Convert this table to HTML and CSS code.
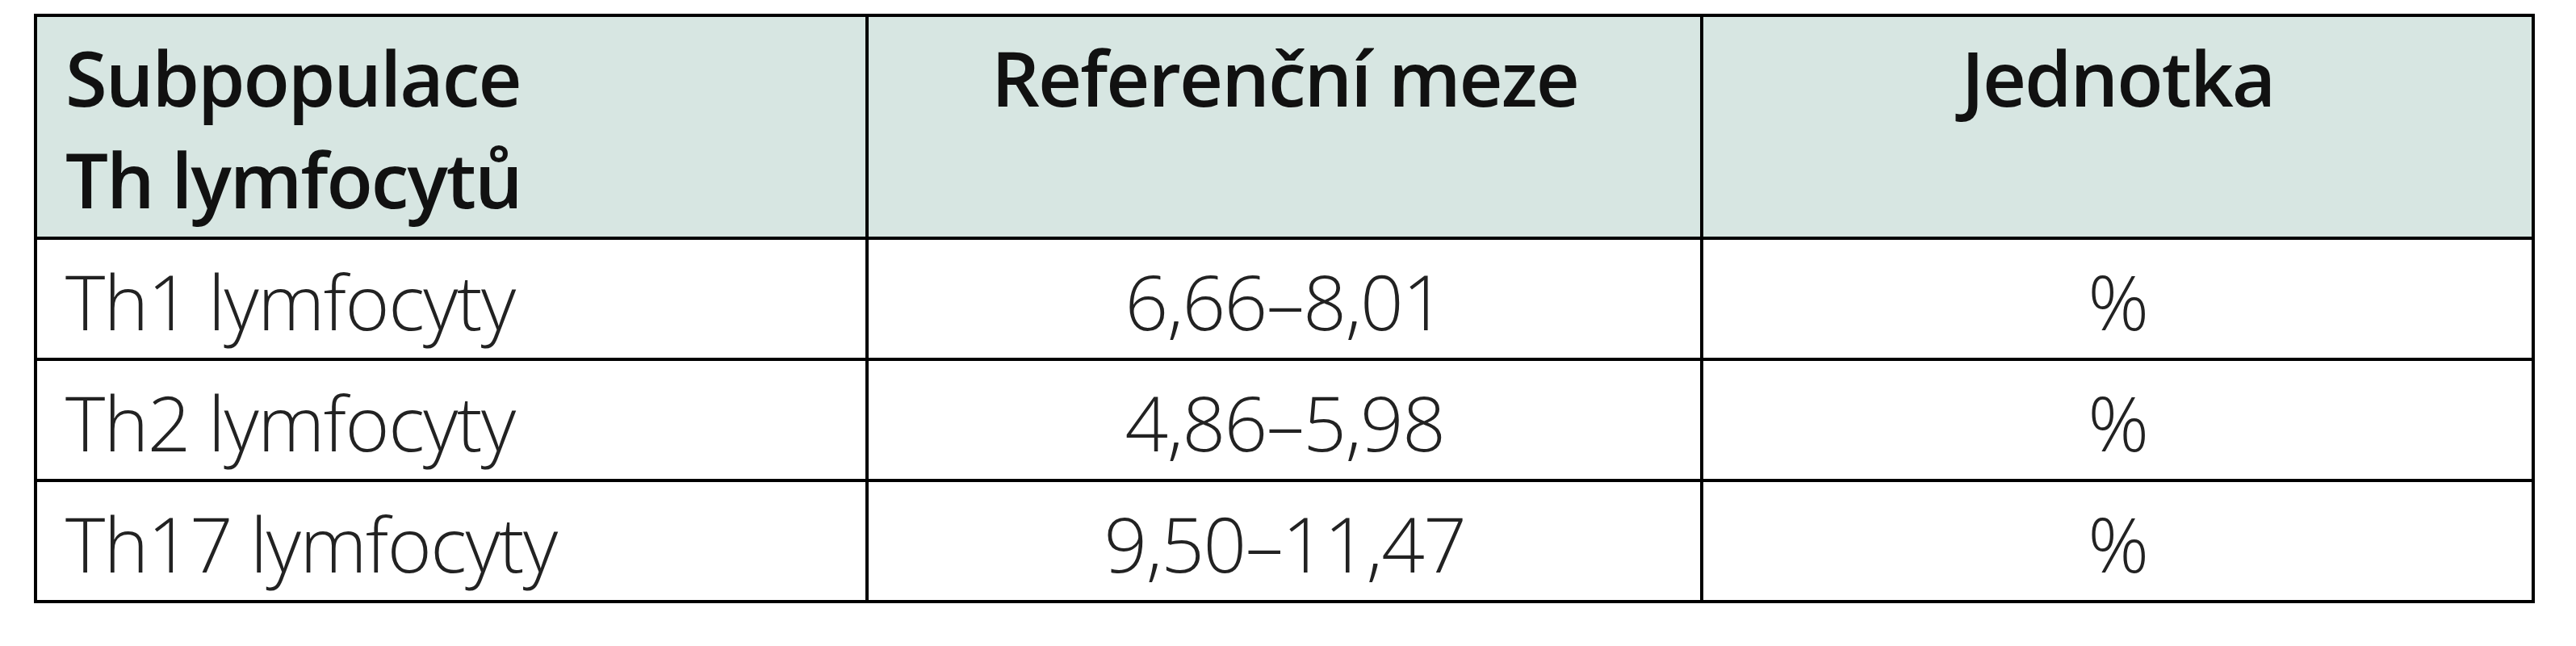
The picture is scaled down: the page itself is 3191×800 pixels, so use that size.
FILE: index.html
```html
<!DOCTYPE html>
<html lang="cs">
<head>
<meta charset="utf-8">
<title>Subpopulace Th lymfocytů</title>
<link rel="stylesheet" href="styles.css">
</head>
<body>
<table class="ref-table">
  <colgroup>
    <col class="col-a">
    <col class="col-b">
    <col class="col-c">
  </colgroup>
  <thead>
    <tr class="head-row">
      <th class="cell-left">Subpopulace<br>Th lymfocytů</th>
      <th class="cell-center">Referenční meze</th>
      <th class="cell-center">Jednotka</th>
    </tr>
  </thead>
  <tbody>
    <tr class="body-row">
      <td class="cell-left">Th1 lymfocyty</td>
      <td class="cell-center">6,66–8,01</td>
      <td class="cell-center">%</td>
    </tr>
    <tr class="body-row">
      <td class="cell-left">Th2 lymfocyty</td>
      <td class="cell-center">4,86–5,98</td>
      <td class="cell-center">%</td>
    </tr>
    <tr class="body-row">
      <td class="cell-left">Th17 lymfocyty</td>
      <td class="cell-center">9,50–11,47</td>
      <td class="cell-center">%</td>
    </tr>
  </tbody>
</table>
</body>
</html>
```
FILE: styles.css
```css
html, body {
  margin: 0;
  padding: 0;
  background: #ffffff;
}

body {
  padding: 17px 0 0 42px;
  font-family: "Open Sans", "Liberation Sans", sans-serif;
  color: #1b1b1b;
}

.ref-table {
  width: 3098px;
  table-layout: fixed;
  border-collapse: separate;
  border-spacing: 0;
  border-top: 4px solid #000;
  border-left: 4px solid #000;
}

.col-a { width: 1030px; }
.col-b { width: 1034px; }
.col-c { width: 1030px; }

.ref-table th,
.ref-table td {
  box-sizing: border-box;
  border-right: 4px solid #000;
  border-bottom: 4px solid #000;
  font-size: 94px;
  line-height: 126px;
  padding: 0 34px 0 35px;
}

.head-row th {
  height: 276px;
  vertical-align: top;
  padding-top: 12px;
  background: #d7e6e2;
  font-weight: 600;
  color: #111;
  letter-spacing: -2px;
}

.body-row td {
  height: 150px;
  vertical-align: middle;
  padding-top: 6px;
  padding-bottom: 0;
  font-weight: 300;
  color: #222;
  letter-spacing: -1.5px;
}

.cell-left { text-align: left; }
.cell-center { text-align: center; }
```
